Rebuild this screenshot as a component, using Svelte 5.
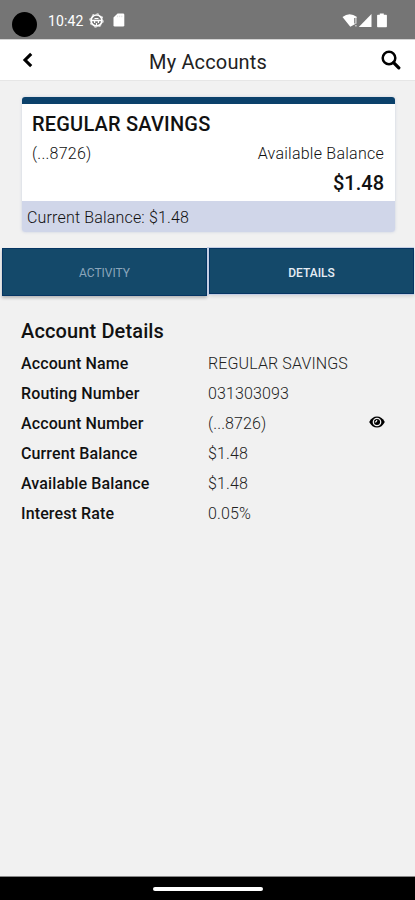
<script lang="ts">
  let activeTab = $state("Details");
  const tabs = ["Activity", "Details"];

  const details = [
    { label: "Account Name", value: "REGULAR SAVINGS" },
    { label: "Routing Number", value: "031303093" },
    { label: "Account Number", value: "(...8726)", hidden: true },
    { label: "Current Balance", value: "$1.48" },
    { label: "Available Balance", value: "$1.48" },
    { label: "Interest Rate", value: "0.05%" }
  ];
</script>

<div class="screen">
  <div class="status-bar">
    <span class="camera"></span>
    <span class="time">10:42</span>
    <svg class="globe" width="15" height="15" viewBox="0 0 15 15" fill="none" stroke="#fff">
      <circle cx="7.5" cy="7.5" r="5.5" stroke-width="1.700" />
      <circle cx="7.5" cy="7.5" r="6.7" stroke-width="1" stroke-dasharray="2.2 3.06" />
      <path d="M2 7.500h11" stroke-width="1.600" />
      <path d="M5.600 7.500v2.600M9.400 7.500v2.600M7.500 10v3M5.500 5.500h4" stroke-width="1.200" />
    </svg>
    <svg class="sd" width="12" height="14" viewBox="0 0 12 14">
      <path d="M4.600 0.500H10q1.300 0 1.300 1.300v10.400q0 1.300-1.300 1.300H1.800q-1.300 0-1.300-1.300V4.600z" fill="#fff" />
      <path d="M4.600 2.600v1.600M6.700 2.600v1.600M8.800 2.600v1.600" stroke="#d8d8d8" stroke-width="0.800" />
    </svg>
    <svg class="signal" width="47" height="15" viewBox="0 0 47 15" fill="#fff">
      <path d="M0.500 4Q7.500-1.400 15 4l-1.200 1.500v5.200L8.300 13.800z" />
      <path d="M13.700 5v5.500M13.700 11.900v1.600" stroke="#757575" stroke-width="3" />
      <path d="M13.900 4.500v6.300M13.900 12v1.600" stroke="#ddd" stroke-width="1.200" />
      <path d="M29.500 1v13H16.800z" />
      <path d="M37.800 1.800V0.500h4v1.300h2.400q0.700 0 0.700 0.700v11q0 0.700-0.700 0.700h-8.400q-0.700 0-0.700-0.700v-11q0-0.700 0.700-0.700z" />
    </svg>
  </div>

  <header class="header">
    <button class="back" aria-label="Back">
      <svg width="11" height="16" viewBox="0 0 11 16">
        <path d="M9.200 1.800L3 8l6.200 6.200" fill="none" stroke="#000" stroke-width="3.100" />
      </svg>
    </button>
    <h1>My Accounts</h1>
    <button class="search" aria-label="Search">
      <svg width="20" height="20" viewBox="0 0 20 20" fill="none" stroke="#000">
        <circle cx="8" cy="8" r="6.300" stroke-width="2.500" />
        <path d="M12.600 12.600l5.200 5.200" stroke-width="3.300" stroke-linecap="round" />
      </svg>
    </button>
  </header>

  <section class="card">
    <div class="card-body">
      <h2>REGULAR SAVINGS</h2>
      <div class="card-row">
        <span>(...8726)</span>
        <span>Available Balance</span>
      </div>
      <div class="amount">$1.48</div>
    </div>
    <div class="card-footer">Current Balance: $1.48</div>
  </section>

  <div class="tabs">
    {#each tabs as tab}
      <button class="tab" class:active={activeTab === tab} onclick={() => (activeTab = tab)}>{tab}</button>
    {/each}
  </div>

  <section class="details">
    <h3>Account Details</h3>
    {#each details as item}
      <div class="detail">
        <span class="label">{item.label}</span>
        <span class="value">{item.value}</span>
        {#if item.hidden}
          <svg class="eye" width="16" height="12" viewBox="0 0 16 12">
            <path d="M0.200 6Q3 0.500 8 0.500T15.800 6Q13 11.500 8 11.500T0.200 6z" fill="#000" />
            <circle cx="8" cy="6" r="3.700" fill="none" stroke="#f1f1f1" stroke-width="1.300" />
            <path d="M5.800 5.900q1.700 0.400 2-1.900" fill="none" stroke="#f1f1f1" stroke-width="1.200" />
          </svg>
        {/if}
      </div>
    {/each}
  </section>

  <div class="nav-bar"><span class="handle"></span></div>
</div>

<style>
  :global(body) {
    background: #f1f1f1;
  }
  .screen {
    display: flex;
    flex-direction: column;
    width: 415px;
    height: 900px;
    overflow: hidden;
    background: #f1f1f1;
    color: #111;
    font-family: Roboto, "Liberation Sans", sans-serif;
  }
  h1, h2, h3 {
    margin: 0;
  }
  button {
    border: none;
    padding: 0;
    background: none;
    font-family: inherit;
  }
  svg {
    display: block;
    flex: none;
  }
  .status-bar {
    display: flex;
    align-items: flex-start;
    flex: none;
    height: 39px;
    background: #757575;
    color: #fff;
  }
  .camera {
    width: 25px;
    height: 25px;
    margin: 12px 0 0 12px;
    border-radius: 50%;
    background: #000;
  }
  .time {
    margin: 12px 0 0 11px;
    width: 36px;
    font-size: 14px;
    line-height: 18px;
    letter-spacing: 0.1px;
  }
  .globe {
    margin: 13px 0 0 5px;
  }
  .sd {
    margin: 13px 0 0 9px;
  }
  .signal {
    margin: 13px 26px 0 auto;
  }
  .header {
    display: flex;
    align-items: center;
    justify-content: space-between;
    flex: none;
    box-sizing: border-box;
    height: 42px;
    padding: 0 14px 0 22px;
    background: #fff;
    border-top: 1px solid #d4d4d4;
    border-bottom: 1px solid #e6e6e6;
  }
  .back {
    width: 13px;
  }
  h1 {
    padding-top: 4px;
    color: #222;
    font-size: 20px;
    font-weight: 400;
    line-height: 24px;
    letter-spacing: 0.15px;
  }
  .card {
    flex: none;
    margin: 16px 20px 0 22px;
    border-radius: 3px;
    overflow: hidden;
    box-shadow: 0 0 3px rgba(130, 145, 190, 0.35);
  }
  .card-body {
    box-sizing: border-box;
    height: 104px;
    padding: 8px 11px 0 10px;
    background: #fff;
    border-top: 7px solid #0b416b;
  }
  h2 {
    font-size: 20px;
    font-weight: 500;
    line-height: 24px;
    letter-spacing: 0.2px;
  }
  .card-row {
    display: flex;
    justify-content: space-between;
    margin-top: 8px;
    font-size: 16px;
    font-weight: 300;
    line-height: 20px;
    letter-spacing: 0.25px;
  }
  .amount {
    margin-top: 7px;
    font-size: 20px;
    font-weight: 500;
    line-height: 24px;
    text-align: right;
  }
  .card-footer {
    box-sizing: border-box;
    height: 31px;
    padding: 1px 0 0 5px;
    background: #d0d6e9;
    font-size: 16px;
    font-weight: 300;
    line-height: 32px;
    letter-spacing: 0.17px;
  }
  .tabs {
    display: grid;
    grid-template-columns: 205px 205px;
    gap: 2px;
    flex: none;
    height: 50px;
    margin-top: 15px;
    padding-left: 2px;
  }
  .tab {
    box-sizing: border-box;
    height: 48px;
    margin-top: 1px;
    padding-top: 2px;
    background: #14496a;
    border: 1px solid #063563;
    color: #8ba6bb;
    font-size: 12px;
    text-transform: uppercase;
    box-shadow: 0 2px 3px rgba(0, 0, 0, 0.25);
  }
  .tab.active {
    height: 46px;
    padding-top: 4px;
    color: #e6edf5;
    font-weight: 500;
    box-shadow: -1px 0 0 1px #c5cfe4, 0 2px 4px rgba(0, 0, 0, 0.15);
  }
  .details {
    flex: 1;
    padding: 22px 30px 0 21px;
  }
  h3 {
    margin-bottom: 5px;
    font-size: 20px;
    font-weight: 500;
    line-height: 24px;
    letter-spacing: 0.13px;
  }
  .detail {
    display: flex;
    align-items: center;
    height: 30px;
    font-size: 16px;
    letter-spacing: 0.12px;
  }
  .label {
    width: 187px;
    font-weight: 500;
  }
  .value {
    color: #222;
    font-weight: 300;
  }
  .eye {
    margin: -3px 0 0 auto;
  }
  .nav-bar {
    display: flex;
    align-items: center;
    justify-content: center;
    flex: none;
    box-sizing: border-box;
    height: 24px;
    border-top: 1px solid #888;
    background: #000;
  }
  .handle {
    width: 110px;
    height: 4px;
    border-radius: 2px;
    background: #fff;
  }
</style>
